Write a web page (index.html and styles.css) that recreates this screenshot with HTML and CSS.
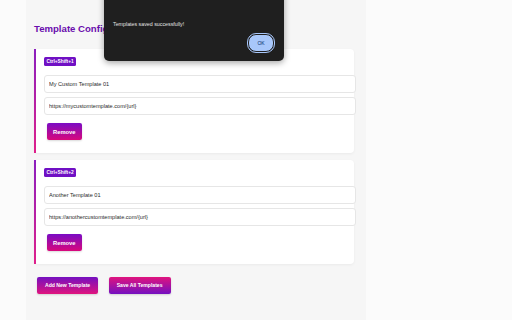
FILE: index.html
```html
<!DOCTYPE html>
<html lang="en">
<head>
    <meta charset="UTF-8">
    <title>Template Configuration</title>
    <link rel="stylesheet" href="styles.css">
</head>

<body>
    <div class="container">
        <h1 class="title">Template Configuration</h1>

        <div class="card">
            <span class="badge">Ctrl+Shift+1</span>
            <input class="field" type="text" value="My Custom Template 01">
            <input class="field" type="text" value="https://mycustomtemplate.com/{url}">
            <button class="btn btn-remove">Remove</button>
        </div>

        <div class="card">
            <span class="badge">Ctrl+Shift+2</span>
            <input class="field" type="text" value="Another Template 01">
            <input class="field" type="text" value="https://anothercustomtemplate.com/{url}">
            <button class="btn btn-remove">Remove</button>
        </div>

        <div class="actions">
            <button class="btn btn-add">Add New Template</button>
            <button class="btn btn-save">Save All Templates</button>
        </div>
    </div>

    <!-- alert() 대화상자 -->
    <div class="dialog">
        <p class="dialog-msg">Templates saved successfully!</p>
        <div class="dialog-foot">
            <button class="dialog-ok">OK</button>
        </div>
    </div>
</body>
</html>
```

FILE: styles.css
```css
html,
body {
    margin: 0;
    padding: 0;
}

body {
    background-color: #fbfbfb;
    font-family: "Liberation Sans", Arial, sans-serif;
}

/*본문 영역*/
.container {
    width: 320px;
    min-height: 320px;
    margin-left: 26px;
    padding: 1px 12px 0 8px;
    background-color: #f6f6f6;
}

.title {
    margin: 22px 0 14px;
    color: #6a0dad;
    font-size: 9.6px;
    line-height: 12px;
    font-weight: bold;
}

/*템플릿 카드*/
.card {
    margin-bottom: 7px;
    padding: 8px;
    background-color: #fff;
    border-left: 2px solid;
    border-image: linear-gradient(to bottom, #8a1fbf, #e0208a) 1;
    border-radius: 4px;
    box-shadow: 0 1px 3px rgba(0, 0, 0, .05);
}

.badge {
    display: block;
    width: fit-content;
    margin-bottom: 9px;
    padding: 1.5px 2.5px;
    background-color: #7010c4;
    color: #fff;
    font-size: 4.8px;
    line-height: 6px;
    font-weight: bold;
    border-radius: 1.5px;
}

.field {
    display: block;
    width: 100%;
    height: 16px;
    margin: 0 0 4px;
    padding: 0 4px;
    border: 1px solid #e6e6e6;
    border-radius: 3px;
    background-color: #fff;
    color: #2a2a2a;
    font-family: "Liberation Sans", Arial, sans-serif;
    font-size: 5.6px;
    outline: none;
}

/*버튼 공통*/
.btn {
    height: 17px;
    padding: 0 8px;
    border: 0;
    border-radius: 2px;
    color: #fff;
    font-family: "Liberation Sans", Arial, sans-serif;
    font-size: 5.1px;
    font-weight: bold;
    box-shadow: 0 1px 2px rgba(0, 0, 0, .15);
}

.btn-remove {
    display: block;
    margin: 8px 3px 5px;
    padding: 0 6px;
    font-size: 5.8px;
    background: linear-gradient(to bottom, #7a0cc4, #d8087c);
}

.actions {
    margin-top: 9px;
}

.btn-add {
    margin: 3px;
    background: linear-gradient(to bottom, #7410c0, #e0147e);
}

.btn-save {
    margin: 3px;
    background: linear-gradient(to bottom, #e0147e, #7410c0);
}

/*알림 대화상자 - 화면 위에 겹침*/
.dialog {
    position: absolute;
    top: -10px;
    left: 104px;
    width: 180px;
    height: 71px;
    box-sizing: border-box;
    padding: 0 10px 9px 9px;
    background-color: #1f1f1f;
    border-radius: 0 0 5px 5px;
    box-shadow: 0 2px 6px rgba(0, 0, 0, .35);
    display: flex;
    flex-direction: column;
    justify-content: flex-end;
}

.dialog-msg {
    margin: 0 0 6px;
    color: #e3e3e3;
    font-size: 5.3px;
    line-height: 8px;
}

.dialog-foot {
    display: flex;
    justify-content: flex-end;
}

.dialog-ok {
    width: 26px;
    height: 18px;
    padding: 0;
    border: 1px solid #1f1f1f;
    border-radius: 8px;
    outline: 1.5px solid #a8c7fa;
    background-color: #a8c7fa;
    color: #062e6f;
    font-family: "Liberation Sans", Arial, sans-serif;
    font-size: 5px;
}
```
